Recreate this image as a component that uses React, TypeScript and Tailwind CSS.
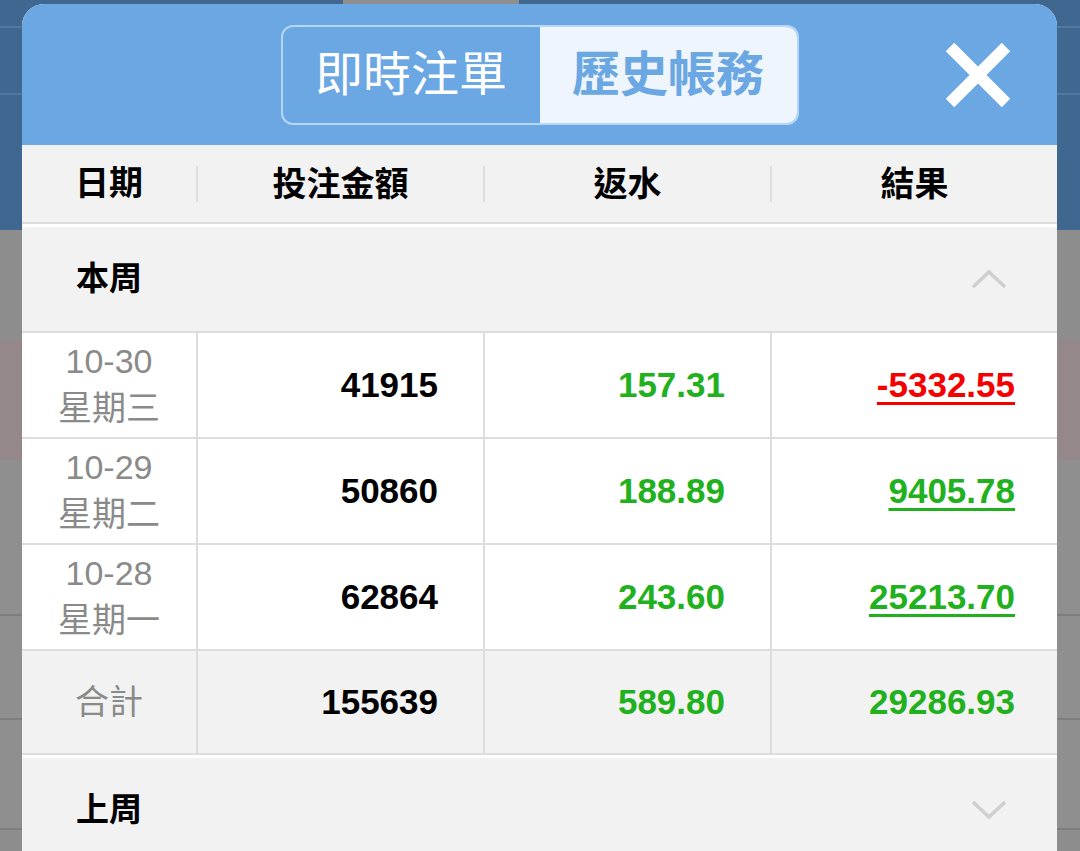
import React from "react";

const font = "font-['Liberation_Sans','Noto_Sans_CJK_TC',sans-serif]";

interface DayRow {
  date: string;
  weekday: string;
  stake: string;
  rebate: string;
  result: string;
  loss?: boolean;
}

const rows: DayRow[] = [
  { date: "10-30", weekday: "星期三", stake: "41915", rebate: "157.31", result: "-5332.55", loss: true },
  { date: "10-29", weekday: "星期二", stake: "50860", rebate: "188.89", result: "9405.78" },
  { date: "10-28", weekday: "星期一", stake: "62864", rebate: "243.60", result: "25213.70" },
];

function Chevron({ up }: { up?: boolean }) {
  return (
    <svg width="36" height="22" viewBox="0 0 36 22" fill="none">
      <path
        d={up ? "M2 19 L18 4 L34 19" : "M2 3 L18 18 L34 3"}
        stroke="#cfcfcf"
        strokeWidth="3.5"
      />
    </svg>
  );
}

function Section({ title, up }: { title: string; up?: boolean }) {
  return (
    <div className="flex items-center justify-between h-[107px] bg-[#f2f2f2] border-t-[3px] border-white pl-[54px] pr-[50px]">
      <span className="text-[33px] font-bold text-black">{title}</span>
      <Chevron up={up} />
    </div>
  );
}

const cols = "grid grid-cols-[174px_287px_287px_1fr]";

export default function App() {
  return (
    <div className={`relative w-full h-[851px] overflow-hidden bg-[#8d8d8d] ${font}`}>
      {/* page behind the dimmed overlay */}
      <div className="flex flex-col">
        <div className="h-[28px] bg-[#3f6790] border-b-2 border-[#52789f] flex">
          <div className="ml-[343px] w-[176px] bg-[#8f8f8f]" />
        </div>
        <div className="h-[67px] bg-[#3f6790] border-b-2 border-[#52789f]" />
        <div className="h-[135px] bg-[#3f6790]" />
        <div className="h-[110px] bg-[#8d8d8d]" />
        <div className="h-[120px] bg-[#958888]" />
        <div className="h-[156px] bg-[#8f8f8f] border-b-2 border-[#7e7e7e]" />
        <div className="h-[104px] bg-[#8f8f8f] border-b-2 border-[#7e7e7e]" />
        <div className="h-[110px] bg-[#8f8f8f] border-b-2 border-[#7e7e7e]" />
      </div>

      {/* modal */}
      <div className="absolute left-[22px] right-[23px] top-[4px] bg-white rounded-t-[22px] overflow-hidden">
        <div className="grid grid-cols-[1fr_auto_1fr] items-center h-[141px] bg-[#6aa7e3]">
          <div />
          <div className="flex h-[100px] w-[518px] rounded-[12px] border-2 border-[#b5d6f5] overflow-hidden">
            <button className="flex-1 flex items-center justify-center text-[48px] text-white">
              即時注單
            </button>
            <button className="flex-1 flex items-center justify-center text-[48px] font-bold text-[#6aa7e3] bg-[#eef5fd]">
              歷史帳務
            </button>
          </div>
          <div className="flex justify-end pr-[46px]">
            <svg width="66" height="64" viewBox="0 0 66 64">
              <path d="M5 4 L61 60 M61 4 L5 60" stroke="white" strokeWidth="12" />
            </svg>
          </div>
        </div>

        <div className={`${cols} h-[79px] bg-[#f2f2f2] border-b-2 border-[#dcdcdc] items-center text-[34px] font-bold text-black`}>
          <div className="text-center">日期</div>
          <div className="text-center border-l-2 border-[#dedede] h-[36px] leading-[36px]">投注金額</div>
          <div className="text-center border-l-2 border-[#dedede] h-[36px] leading-[36px]">返水</div>
          <div className="text-center border-l-2 border-[#dedede] h-[36px] leading-[36px]">結果</div>
        </div>

        <Section title="本周" up />

        {rows.map((r) => (
          <div key={r.date} className={`${cols} h-[106px] border-t-2 border-[#dddddd] bg-white`}>
            <div className="flex flex-col items-center justify-center text-[34px] leading-[47px] text-[#8a8a8a]">
              <span>{r.date}</span>
              <span>{r.weekday}</span>
            </div>
            <div className="flex items-center justify-end pr-[45px] border-l-2 border-[#dddddd] text-[35px] font-bold text-black">
              {r.stake}
            </div>
            <div className="flex items-center justify-end pr-[45px] border-l-2 border-[#dddddd] text-[35px] font-bold text-[#22b11e]">
              {r.rebate}
            </div>
            <div className="flex items-center justify-end pr-[42px] border-l-2 border-[#dddddd] text-[35px] font-bold">
              <span
                className={`underline decoration-[3px] underline-offset-[5px] ${
                  r.loss ? "text-[#f50000]" : "text-[#22b11e]"
                }`}
              >
                {r.result}
              </span>
            </div>
          </div>
        ))}

        <div className={`${cols} h-[106px] border-t-2 border-b-2 border-[#dddddd] bg-[#f2f2f2]`}>
          <div className="flex items-center justify-center text-[34px] text-[#8a8a8a]">合計</div>
          <div className="flex items-center justify-end pr-[45px] border-l-2 border-[#dddddd] text-[35px] font-bold text-black">
            155639
          </div>
          <div className="flex items-center justify-end pr-[45px] border-l-2 border-[#dddddd] text-[35px] font-bold text-[#22b11e]">
            589.80
          </div>
          <div className="flex items-center justify-end pr-[42px] border-l-2 border-[#dddddd] text-[35px] font-bold text-[#22b11e]">
            29286.93
          </div>
        </div>

        <Section title="上周" />
      </div>
    </div>
  );
}
